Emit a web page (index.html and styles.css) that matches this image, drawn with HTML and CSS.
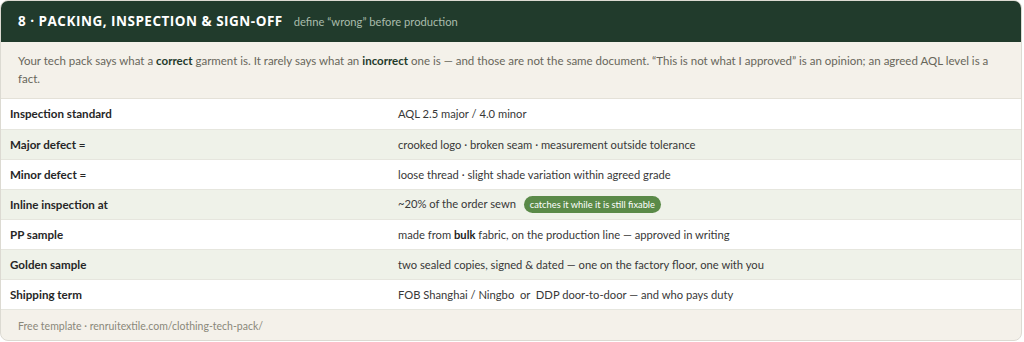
FILE: index.html
```html
<!DOCTYPE html>
<html>
<head>
<meta charset="utf-8">
<link rel="stylesheet" href="styles.css">
</head>
<body>
<section class="card">
  <header class="head">
    <h2 class="title">8 · PACKING, INSPECTION &amp; SIGN-OFF</h2>
    <span class="sub">define “wrong” before production</span>
  </header>
  <p class="intro">Your tech pack says what a <b>correct</b> garment is. It rarely says what an <b>incorrect</b> one is — and those are not the same document. “This is not what I approved” is an opinion; an agreed AQL level is a fact.</p>
  <table class="spec">
    <tr><th>Inspection standard</th><td>AQL 2.5 major / 4.0 minor</td></tr>
    <tr><th>Major defect =</th><td>crooked logo · broken seam · measurement outside tolerance</td></tr>
    <tr><th>Minor defect =</th><td>loose thread · slight shade variation within agreed grade</td></tr>
    <tr><th>Inline inspection at</th><td>~20% of the order sewn <span class="pill">catches it while it is still fixable</span></td></tr>
    <tr><th>PP sample</th><td>made from <b>bulk</b> fabric, on the production line — approved in writing</td></tr>
    <tr><th>Golden sample</th><td>two sealed copies, signed &amp; dated — one on the factory floor, one with you</td></tr>
    <tr><th>Shipping term</th><td>FOB Shanghai / Ningbo &nbsp;or&nbsp; DDP door-to-door — and who pays duty</td></tr>
  </table>
  <footer class="foot">Free template · renruitextile.com/clothing-tech-pack/</footer>
</section>
</body>
</html>
```
FILE: styles.css
```css
* { box-sizing: border-box; }
html, body { margin: 0; padding: 0; background: #ffffff; }
body { font-family: "Lato", "Open Sans", sans-serif; color: #333; }
.card {
  width: 1022px;
  height: 341px;
  border: 1px solid #dcdad2;
  border-radius: 8px;
  overflow: hidden;
  background: #f4f1ea;
}
.head {
  background: #213b2c;
  height: 41px;
  display: flex;
  align-items: baseline;
  padding: 11px 17px 0;
  gap: 11px;
}
.title {
  margin: 0;
  font-family: "Open Sans", sans-serif;
  color: #ffffff;
  font-size: 13.5px;
  font-weight: 700;
  letter-spacing: 0.5px;
}
.sub {
  color: #a9bcab;
  font-size: 11.2px;
}
.intro {
  margin: 0;
  padding: 10px 17px 10px;
  font-size: 11.5px;
  line-height: 18px;
  color: #68665a;
  border-bottom: 1px solid #e4e1d8;
}
.intro b { color: #1f3a2a; font-weight: 700; }
.spec {
  width: 100%;
  border-collapse: collapse;
  font-size: 11.2px;
}
.spec tr { height: 30px; background: #ffffff; }
.spec tr:nth-child(even) { background: #eff2e9; }
.spec th, .spec td {
  padding: 0 9px;
  border-bottom: 1px solid #e6e6de;
  vertical-align: middle;
  text-align: left;
}
.spec th { width: 388px; font-size: 11.6px; font-weight: 700; color: #262626; }
.spec td { color: #383838; }
.spec td b { color: #222; }
.pill {
  display: inline-block;
  margin-left: 5px;
  background: #5a8a48;
  color: #fff;
  font-size: 9.3px;
  line-height: 17px;
  padding: 0 6px;
  border-radius: 9px;
}
.foot {
  padding: 10px 17px;
  font-size: 10.5px;
  color: #8a887a;
}
```
